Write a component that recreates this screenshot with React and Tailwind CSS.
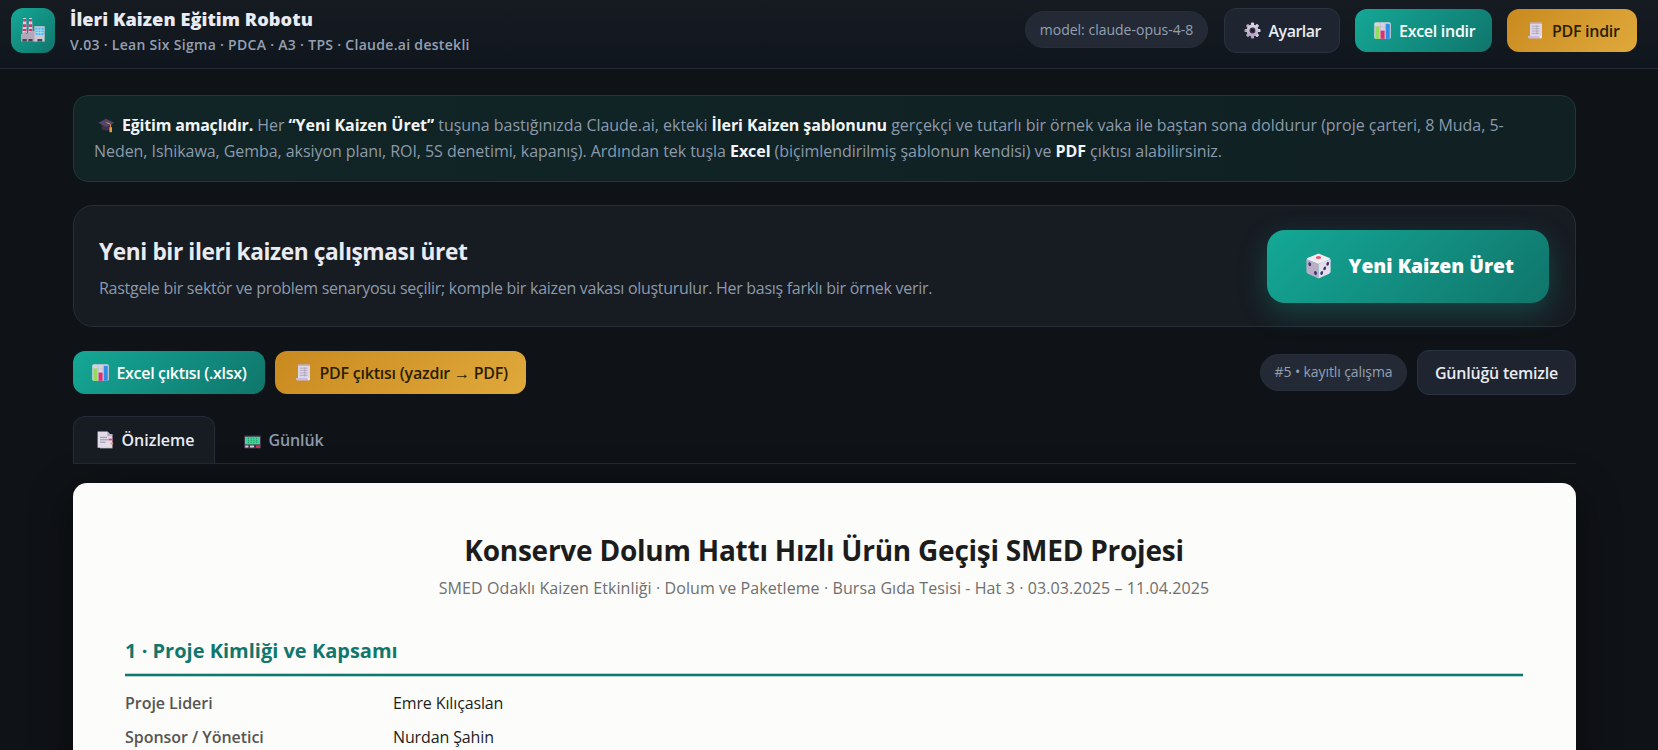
import { useState } from 'react';

const FactoryIcon = () => (
    <svg width="24" height="24" viewBox="0 0 24 24">
        <path d="M2.2 0h2.9l.8 15H1.4zM8.1 0H11l.8 15H7.3z" fill="#d8cfe0" />
        <path d="M2.2 1h2.9v2.6H2.1zM2 6.2h3.2v2.7H1.9zM1.8 11h3.6v2H1.7zM8.1 1H11v2.6H8zM7.9 6.2h3.2v2.7H7.8zM7.7 11h3.6v2H7.6z" fill="#d6336c" />
        <path d="M0 16.2 5.2 13v3.2L10.4 13H14v10.6H0z" fill="#b3a7b8" />
        <path d="M13.4 8.2h10.3v15.4H13.4z" fill="#cfc8d6" />
        <path d="M14.6 9.8h8v7.2h-8z" fill="#4db8ee" />
        <path d="M17.1 9.8v7.2M19.9 9.8v7.2M14.6 12.2h8M14.6 14.6h8" stroke="#d4effc" strokeWidth=".6" />
        <path d="M1.5 21h4.2v2.6H1.5zM7.4 21h4.2v2.6H7.4zM16.4 21h4.8v2.6h-4.8z" fill="#4b4453" />
    </svg>
);

const CapIcon = () => (
    <svg width="17" height="17" viewBox="0 0 17 17" className="inline-block align-[-3px]">
        <path d="M3.6 7.5v4.6c2.4 2.2 7 2.2 9.6 0V7.5z" fill="#3c3048" />
        <path d="M.4 5.8 8 1.8l8.4 4-8 4.4z" fill="#54436a" />
        <path d="m8.4 5.6 4.2 1.6v3.6" fill="none" stroke="#e0913c" strokeWidth="1" />
        <path d="M11.4 10.2h2.6v5h-2.6z" fill="#e89a45" />
    </svg>
);

const GearIcon = () => (
    <svg width="17" height="17" viewBox="0 0 17 17">
        <defs>
            <linearGradient id="gear" x1="0" y1="0" x2="0" y2="1">
                <stop offset="0" stopColor="#ded5e4" />
                <stop offset="1" stopColor="#b29fc0" />
            </linearGradient>
        </defs>
        <g fill="url(#gear)">
            {[0, 45, 90, 135].map((a) => (
                <rect key={a} x="6.9" y=".5" width="3.2" height="16" rx=".9" transform={`rotate(${a} 8.5 8.5)`} />
            ))}
            <circle cx="8.5" cy="8.5" r="6" />
        </g>
        <circle cx="8.5" cy="8.5" r="2.9" fill="#3a3347" />
        <circle cx="8.5" cy="8.5" r="1.8" fill="#1e2430" />
    </svg>
);

const ChartIcon = () => (
    <svg width="17" height="17" viewBox="0 0 17 17">
        <rect x=".2" y=".2" width="16.6" height="16.6" rx="1.6" fill="#d9d2e0" />
        <path d="M.2 5h16.6M.2 10h16.6M6.2.2v16.6M11.2.2v16.6" stroke="#bfb5c9" strokeWidth=".6" />
        <rect x="1.4" y="4.4" width="4" height="12.4" fill="#93dc5c" />
        <rect x="6.6" y="8.6" width="4" height="8.2" fill="#e02f6d" />
        <rect x="11.8" y="1.8" width="4" height="15" fill="#2f8fe6" />
    </svg>
);

const ReceiptIcon = () => (
    <svg width="17" height="17" viewBox="0 0 17 17">
        <path d="M3 .6h12v14.2H3z" fill="#ddd6e6" />
        <path d="M3 .6h12v1H3z" fill="#a99fb8" />
        <path d="M4.8 4.2h7.6M4.8 6.6h7.6M4.8 9h7.6M4.8 11.4h7.6M9.8 3.4v9" stroke="#aaa0b8" strokeWidth=".8" />
        <path d="M1 14h11.4c0 1.3.4 2.4 1.2 2.6H2.2C1.4 16.4 1 15.2 1 14z" fill="#c9bce4" />
        <path d="M12.4 14H15c0 1.6-.5 2.6-1.4 2.6-.8-.2-1.2-1.3-1.2-2.6z" fill="#efeaf5" />
    </svg>
);

const DiceIcon = () => (
    <svg width="25" height="26" viewBox="0 0 25 26">
        <path d="M.6 6.2 12.5 11v14.6L2 20.7C.9 20.1.4 19.4.4 18.2v-11z" fill="#b9aec4" />
        <path d="M12.5 11 24.4 6.2l.2 1v11c0 1.2-.5 1.9-1.6 2.5l-10.5 4.9z" fill="#e4dfea" />
        <path d="M12.5.6 23 4.8c.7.3 1.1.7 1.4 1.4L12.5 11 .6 6.2C.9 5.5 1.3 5.1 2 4.8z" fill="#efecf2" />
        <ellipse cx="12.5" cy="4.6" rx="2.7" ry="1.5" fill="#f0566f" />
        <g fill="#45307a">
            <ellipse cx="3.7" cy="11.2" rx="1.4" ry="2" transform="rotate(-16 3.7 11.2)" />
            <ellipse cx="9.5" cy="20" rx="1.4" ry="2" transform="rotate(-16 9.5 20)" />
            <ellipse cx="21.7" cy="10.8" rx="1.3" ry="2" transform="rotate(20 21.7 10.8)" />
            <ellipse cx="18.7" cy="15.4" rx="1.3" ry="2" transform="rotate(20 18.7 15.4)" />
            <ellipse cx="15.7" cy="20" rx="1.3" ry="2" transform="rotate(20 15.7 20)" />
        </g>
    </svg>
);

const PagesIcon = () => (
    <svg width="17" height="18" viewBox="0 0 17 18">
        <path d="M3 3h12.6v14.4H3z" fill="#b9aec6" />
        <path d="M.6.6h9.8L15 5.2v11.6H.6z" fill="#e2dbe8" />
        <path d="M10.4.6 15 5.2h-4.6z" fill="#b5aac2" />
        <path d="M3 6.4h7M3 8.8h8.4M3 11.2h5.6" stroke="#9b91aa" strokeWidth="1" />
        <path d="M11.6 7.6h4v1.8h-4z" fill="#e0457b" />
        <path d="M13.4 11.6h2.8v1.8h-2.8z" fill="#e89a45" />
    </svg>
);

const PagerIcon = () => (
    <svg width="17" height="17" viewBox="0 0 17 17">
        <rect x="0" y="3.6" width="17" height="13" rx="1" fill="#43354f" />
        <rect x="1" y="4.8" width="15" height="7.6" fill="#3fd693" />
        <path d="M4.5 5.8v5.4M7.2 5.8v5.4M9.9 5.8v5.4M12.6 5.8v5.4" stroke="#23946a" strokeWidth="1" strokeDasharray="1.2 .8" />
        <path d="M1.2 13.6h3.2v2H1.2zM6 13.6h4v2H6z" fill="#d5cbdd" />
        <path d="M12 13.4h4v2.4h-4z" fill="#e02f5d" />
    </svg>
);

const tabs = [
    { id: 'preview', label: 'Önizleme', icon: PagesIcon, box: 'w-[142px] pl-[22.5px]' },
    { id: 'log', label: 'Günlük', icon: PagerIcon, box: 'w-[142px] pl-[27.5px] tracking-[-0.12px]' }
];

const identity = [
    { label: 'Proje Lideri', value: 'Emre Kılıçaslan' },
    { label: 'Sponsor / Yönetici', value: 'Nurdan Şahin' }
];

const teal = 'bg-linear-[135deg,#14a896,#10756b] text-white';
const amber = 'bg-linear-[135deg,#c98a1f,#e0a93b] text-[#2b1d00]';

export default function App() {
    const [activeTab, setActiveTab] = useState('preview');

    return (
        <div className="h-[750px] overflow-hidden bg-[#0f1216] font-['Open_Sans','Noto_Sans',sans-serif] text-base text-[#e8ebf1]">
            <header className="flex h-[69px] items-start border-b border-[#252c38] bg-linear-to-b from-[#161b22] to-[#10161d] pr-[21px] pl-[10.5px]">
                <div className="mt-2 flex size-[44.5px] items-center justify-center rounded-xl bg-linear-[135deg,#14a896,#10756b]">
                    <FactoryIcon />
                </div>
                <div className="mt-[7px] ml-[15px] whitespace-nowrap">
                    <h1 className="text-[18.2px] leading-[25px] font-extrabold tracking-[0.05px]">İleri Kaizen Eğitim Robotu</h1>
                    <p className="text-sm leading-[25px] font-semibold tracking-[0.3px] text-[#94a0b2]">
                        V.03 · Lean Six Sigma · PDCA · A3 · TPS · Claude.ai destekli
                    </p>
                </div>
                <div className="mt-2 ml-auto flex h-[45px] items-center gap-[15.5px] whitespace-nowrap">
                    <span className="mb-0.5 flex h-[37px] w-[183px] items-center justify-center rounded-full border border-[#262e3b] bg-[#232a36] text-sm text-[#94a0b2]">
                        model: claude-opus-4-8
                    </span>
                    <button className="flex h-[45px] w-[116px] items-center gap-2 rounded-xl border border-[#2a3140] bg-[#1e2430] pl-[19px] font-semibold tracking-[-0.5px]">
                        <GearIcon />
                        Ayarlar
                    </button>
                    <button className={`flex h-[43px] w-[136.5px] items-center gap-2 rounded-xl pl-[19px] font-semibold tracking-[-0.28px] ${teal}`}>
                        <ChartIcon />
                        Excel indir
                    </button>
                    <button className={`flex h-[43px] w-[130px] items-center gap-2 rounded-xl pl-[20px] font-semibold tracking-[-0.29px] ${amber}`}>
                        <ReceiptIcon />
                        PDF indir
                    </button>
                </div>
            </header>

            <main className="ml-[73px] w-[1503px] pt-[26px]">
                <div className="h-[87px] rounded-[15px] border border-[#1b3b37] bg-linear-to-r from-[#112526] to-[#102023] pt-4 pl-5 leading-[26px] whitespace-nowrap text-[#8c9aab]">
                    <p className="tracking-[-0.03px]">
                        <span className="mr-[7px] ml-1"><CapIcon /></span>
                        <b className="tracking-[-0.2px] text-[#f1f4f8]">Eğitim amaçlıdır.</b> Her <b className="text-[#f1f4f8]">“Yeni Kaizen Üret”</b>{' '}
                        tuşuna bastığınızda Claude.ai, ekteki <b className="tracking-[-0.1px] text-[#f1f4f8]">İleri Kaizen şablonunu</b>{' '}
                        gerçekçi ve tutarlı bir örnek vaka ile baştan sona doldurur (proje çarteri, 8 Muda, 5-
                    </p>
                    <p className="tracking-[-0.06px]">
                        Neden, Ishikawa, Gemba, aksiyon planı, ROI, 5S denetimi, kapanış). Ardından tek tuşla <b className="text-[#f1f4f8]">Excel</b>{' '}
                        (biçimlendirilmiş şablonun kendisi) ve <b className="text-[#f1f4f8]">PDF</b> çıktısı alabilirsiniz.
                    </p>
                </div>

                <section className="mt-[23px] flex h-[122px] items-center justify-between rounded-[20px] border border-[#272e3a] bg-[#171b22] pr-[26px] pl-[25px] whitespace-nowrap">
                    <div className="pt-[3px]">
                        <h2 className="text-[22.7px] leading-[34px] font-bold tracking-[-0.38px]">Yeni bir ileri kaizen çalışması üret</h2>
                        <p className="mt-1.5 leading-[26px] tracking-[-0.28px] text-[#8c9aab]">
                            Rastgele bir sektör ve problem senaryosu seçilir; komple bir kaizen vakası oluşturulur. Her basış farklı bir örnek verir.
                        </p>
                    </div>
                    <button className={`flex h-[73px] w-[282px] items-center gap-[18px] rounded-[18px] pl-[38.5px] text-[19.4px] font-extrabold shadow-[0_9px_29px_rgba(20,168,150,0.3)] ${teal}`}>
                        <DiceIcon />
                        Yeni Kaizen Üret
                    </button>
                </section>

                <div className="mt-[23px] flex h-[45px] items-center whitespace-nowrap">
                    <button className={`flex h-[43px] w-[191.5px] items-center gap-2 rounded-xl pl-[18.5px] font-semibold tracking-[-0.32px] ${teal}`}>
                        <ChartIcon />
                        Excel çıktısı (.xlsx)
                    </button>
                    <button className={`ml-2.5 flex h-[43px] w-[251px] items-center gap-2 rounded-xl pl-[20px] font-semibold tracking-[-0.23px] ${amber}`}>
                        <ReceiptIcon />
                        PDF çıktısı (yazdır → PDF)
                    </button>
                    <span className="mb-px ml-auto flex h-[37px] w-[147px] items-center justify-center rounded-full border border-[#262e3b] bg-[#232a36] text-sm tracking-[-0.1px] text-[#94a0b2]">
                        #5 • kayıtlı çalışma
                    </span>
                    <button className="ml-2.5 flex h-[45px] w-[159px] items-center justify-center rounded-xl border border-[#2a3140] bg-[#1e2430] font-semibold tracking-[-0.22px]">
                        Günlüğü temizle
                    </button>
                </div>

                <nav className="mt-[21px] flex h-12 border-b border-[#222834]">
                    {tabs.map(({ id, label, icon: Icon, box }) => (
                        <button
                            key={id}
                            onClick={() => setActiveTab(id)}
                            className={`flex h-[47px] items-center gap-2 rounded-t-xl border border-b-0 font-semibold ${box} ${
                                activeTab === id ? 'border-[#252c38] bg-[#171b22] text-[#e8ebf1]' : 'border-transparent text-[#8c9aab]'
                            }`}
                        >
                            <Icon />
                            {label}
                        </button>
                    ))}
                </nav>

                <article className="mt-[18.7px] h-[300px] rounded-[14px] bg-[#fcfcfa] pt-[47.3px] pr-[53px] pl-[52px] text-[#1c1c1c] shadow-[0_11px_44px_rgba(0,0,0,0.4)]">
                    <h2 className="text-center text-[28px] leading-10 font-bold tracking-[-0.24px]">Konserve Dolum Hattı Hızlı Ürün Geçişi SMED Projesi</h2>
                    <p className="mt-[5px] text-center leading-[26px] tracking-[0.09px] text-[#6f6f6f]">
                        SMED Odaklı Kaizen Etkinliği · Dolum ve Paketleme · Bursa Gıda Tesisi - Hat 3 · 03.03.2025 – 11.04.2025
                    </p>
                    <h3 className="mt-[35.5px] text-xl leading-[30px] font-bold text-[#11776d]">1 · Proje Kimliği ve Kapsamı</h3>
                    <div className="mt-[6.5px] h-1 border-y border-[#b5d6d2] bg-[#11776d]"></div>
                    <dl className="mt-[9.5px]">
                        {identity.map(({ label, value }) => (
                            <div key={label} className="flex leading-[34px]">
                                <dt className="w-[268px] font-semibold tracking-[-0.04px] text-[#555555]">{label}</dt>
                                <dd className="tracking-[-0.13px]">{value}</dd>
                            </div>
                        ))}
                    </dl>
                </article>
            </main>
        </div>
    );
}
